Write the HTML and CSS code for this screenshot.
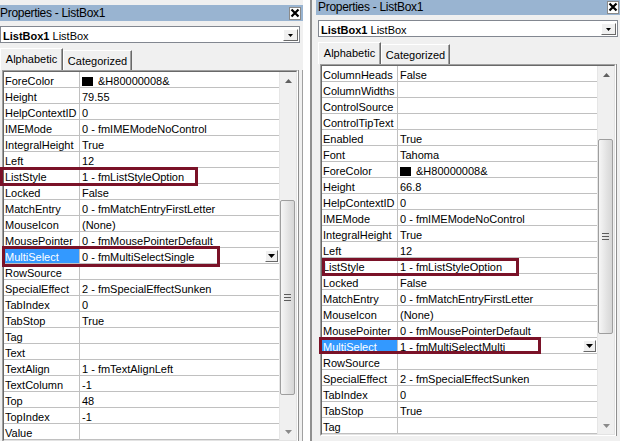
FILE: index.html
```html
<html>
    <head>
        <title>Properties - ListBox1</title>
        <meta name="viewport" content="initial-scale=1.0">
        <link rel="stylesheet" href="styles.css">
    </head>
    <body>
        <!-- before: MultiSelect single -->
        <div class="pane pane-left">
            <div class="titlebar">
                <span class="title">Properties - ListBox1</span>
                <div class="close"><svg width="10" height="10" viewBox="0 0 10 10"><path d="M1.5 1.5 L8.5 8.5 M8.5 1.5 L1.5 8.5" stroke="#000" stroke-width="2.2"/></svg></div>
            </div>
            <div class="combo">
                <b>ListBox1</b>&nbsp;ListBox
                <div class="drop"><svg width="5" height="3" viewBox="0 0 5 3"><path d="M0 0 H5 L2.5 3 Z" fill="#000"/></svg></div>
            </div>
            <div class="tabs">
                <div class="tab tab-on">Alphabetic</div>
                <div class="tab tab-off">Categorized</div>
            </div>
            <div class="frame">
                <div class="grid">
                    <div class="inner">
                        <div class="rows">
                            <div class="row"><div class="name">ForeColor</div><div class="value"><span class="swatch"></span>&amp;H80000008&amp;</div></div>
                            <div class="row"><div class="name">Height</div><div class="value">79.55</div></div>
                            <div class="row"><div class="name">HelpContextID</div><div class="value">0</div></div>
                            <div class="row"><div class="name">IMEMode</div><div class="value">0 - fmIMEModeNoControl</div></div>
                            <div class="row"><div class="name">IntegralHeight</div><div class="value">True</div></div>
                            <div class="row"><div class="name">Left</div><div class="value">12</div></div>
                            <div class="row"><div class="name">ListStyle</div><div class="value">1 - fmListStyleOption</div></div>
                            <div class="row"><div class="name">Locked</div><div class="value">False</div></div>
                            <div class="row"><div class="name">MatchEntry</div><div class="value">0 - fmMatchEntryFirstLetter</div></div>
                            <div class="row"><div class="name">MouseIcon</div><div class="value">(None)</div></div>
                            <div class="row"><div class="name">MousePointer</div><div class="value">0 - fmMousePointerDefault</div></div>
                            <div class="row"><div class="name name-sel">MultiSelect</div><div class="value value-sel"><span>0 - fmMultiSelectSingle</span><div class="pick"><svg width="7" height="4" viewBox="0 0 7 4"><path d="M0 0 H7 L3.5 4 Z" fill="#000"/></svg></div></div></div>
                            <div class="row"><div class="name">RowSource</div><div class="value"></div></div>
                            <div class="row"><div class="name">SpecialEffect</div><div class="value">2 - fmSpecialEffectSunken</div></div>
                            <div class="row"><div class="name">TabIndex</div><div class="value">0</div></div>
                            <div class="row"><div class="name">TabStop</div><div class="value">True</div></div>
                            <div class="row"><div class="name">Tag</div><div class="value"></div></div>
                            <div class="row"><div class="name">Text</div><div class="value"></div></div>
                            <div class="row"><div class="name">TextAlign</div><div class="value">1 - fmTextAlignLeft</div></div>
                            <div class="row"><div class="name">TextColumn</div><div class="value">-1</div></div>
                            <div class="row"><div class="name">Top</div><div class="value">48</div></div>
                            <div class="row"><div class="name">TopIndex</div><div class="value">-1</div></div>
                            <div class="row"><div class="name">Value</div><div class="value"></div></div>
                        </div>
                        <div class="sbar">
                            <div class="arrow"><svg width="7" height="4" viewBox="0 0 7 4"><path d="M3.5 0 L7 4 H0 Z" fill="#606060"/></svg></div>
                            <div class="thumb thumb-low"><div class="grip"></div></div>
                            <div class="arrow arrow-down"><svg width="7" height="4" viewBox="0 0 7 4"><path d="M0 0 H7 L3.5 4 Z" fill="#8a8a8a"/></svg></div>
                        </div>
                    </div>
                </div>
                <div class="edge"></div>
            </div>
        </div>

        <div class="split"></div>

        <!-- after: MultiSelect multi -->
        <div class="pane pane-right">
            <div class="titlebar">
                <span class="title">Properties - ListBox1</span>
                <div class="close"><svg width="10" height="10" viewBox="0 0 10 10"><path d="M1.5 1.5 L8.5 8.5 M8.5 1.5 L1.5 8.5" stroke="#000" stroke-width="2.2"/></svg></div>
            </div>
            <div class="combo">
                <b>ListBox1</b>&nbsp;ListBox
                <div class="drop"><svg width="5" height="3" viewBox="0 0 5 3"><path d="M0 0 H5 L2.5 3 Z" fill="#000"/></svg></div>
            </div>
            <div class="tabs">
                <div class="tab tab-on">Alphabetic</div>
                <div class="tab tab-off">Categorized</div>
            </div>
            <div class="frame">
                <div class="grid">
                    <div class="inner">
                        <div class="rows">
                            <div class="row"><div class="name">ColumnHeads</div><div class="value">False</div></div>
                            <div class="row"><div class="name">ColumnWidths</div><div class="value"></div></div>
                            <div class="row"><div class="name">ControlSource</div><div class="value"></div></div>
                            <div class="row"><div class="name">ControlTipText</div><div class="value"></div></div>
                            <div class="row"><div class="name">Enabled</div><div class="value">True</div></div>
                            <div class="row"><div class="name">Font</div><div class="value">Tahoma</div></div>
                            <div class="row"><div class="name">ForeColor</div><div class="value"><span class="swatch"></span>&amp;H80000008&amp;</div></div>
                            <div class="row"><div class="name">Height</div><div class="value">66.8</div></div>
                            <div class="row"><div class="name">HelpContextID</div><div class="value">0</div></div>
                            <div class="row"><div class="name">IMEMode</div><div class="value">0 - fmIMEModeNoControl</div></div>
                            <div class="row"><div class="name">IntegralHeight</div><div class="value">True</div></div>
                            <div class="row"><div class="name">Left</div><div class="value">12</div></div>
                            <div class="row"><div class="name">ListStyle</div><div class="value">1 - fmListStyleOption</div></div>
                            <div class="row"><div class="name">Locked</div><div class="value">False</div></div>
                            <div class="row"><div class="name">MatchEntry</div><div class="value">0 - fmMatchEntryFirstLetter</div></div>
                            <div class="row"><div class="name">MouseIcon</div><div class="value">(None)</div></div>
                            <div class="row"><div class="name">MousePointer</div><div class="value">0 - fmMousePointerDefault</div></div>
                            <div class="row"><div class="name name-sel">MultiSelect</div><div class="value value-sel"><span>1 - fmMultiSelectMulti</span><div class="pick"><svg width="7" height="4" viewBox="0 0 7 4"><path d="M0 0 H7 L3.5 4 Z" fill="#000"/></svg></div></div></div>
                            <div class="row"><div class="name">RowSource</div><div class="value"></div></div>
                            <div class="row"><div class="name">SpecialEffect</div><div class="value">2 - fmSpecialEffectSunken</div></div>
                            <div class="row"><div class="name">TabIndex</div><div class="value">0</div></div>
                            <div class="row"><div class="name">TabStop</div><div class="value">True</div></div>
                            <div class="row"><div class="name">Tag</div><div class="value"></div></div>
                        </div>
                        <div class="sbar">
                            <div class="arrow"><svg width="7" height="4" viewBox="0 0 7 4"><path d="M3.5 0 L7 4 H0 Z" fill="#606060"/></svg></div>
                            <div class="thumb thumb-high"><div class="grip"></div></div>
                            <div class="arrow arrow-down"><svg width="7" height="4" viewBox="0 0 7 4"><path d="M0 0 H7 L3.5 4 Z" fill="#8a8a8a"/></svg></div>
                        </div>
                    </div>
                </div>
                <div class="edge"></div>
            </div>
        </div>

        <!-- annotation boxes drawn over the grids -->
        <div class="mark mark-a"></div>
        <div class="mark mark-b"></div>
        <div class="mark mark-c"></div>
        <div class="mark mark-d"></div>
    </body>
</html>
```

FILE: styles.css
```css
body {
    margin: 0;
    width: 620px;
    height: 441px;
    overflow: hidden;
    position: relative;
    display: flex;
    align-items: flex-start;
    background-color: #f0f0f0;
    font-family: "Liberation Sans", Arial, sans-serif;
    font-size: 11px;
    color: #000;
}
.pane {
    width: 305px;
    flex: none;
}
.pane-left {
    margin-left: -2px;
    padding-top: 5px;
}
.pane-right {
    margin-top: -1px;
}
.split {
    width: 7px;
    height: 441px;
    flex: none;
    background-color: #fff;
    border-right: 2px solid #8f8f8f;
    margin-right: 4px;
}

/* title bar */
.titlebar {
    height: 16px;
    background-color: #99b4d1;
    display: flex;
    align-items: center;
    justify-content: space-between;
    padding-left: 2px;
}
.title {
    font-size: 12px;
    letter-spacing: -0.3px;
}
.close {
    width: 12px;
    height: 13px;
    box-sizing: border-box;
    margin-right: 2px;
    background-color: #fff;
    border: 1px solid #8a8a8a;
    display: flex;
    align-items: center;
    justify-content: center;
}

/* object combo */
.combo {
    margin: 5px 0 0 2px;
    width: 300px;
    height: 17px;
    box-sizing: border-box;
    border: 1px solid #828790;
    background-color: #fff;
    padding: 3px 0 0 2px;
    line-height: 12px;
    display: flex;
    position: relative;
}
.drop {
    position: absolute;
    right: 1px;
    top: 2px;
    width: 15px;
    height: 12px;
    box-sizing: border-box;
    background-color: #f0f0f0;
    border: 1px solid;
    border-color: #fff #696969 #696969 #fff;
    display: flex;
    align-items: center;
    justify-content: center;
}

/* tabs */
.tabs {
    margin-top: 5px;
    height: 22px;
    padding-left: 2px;
    display: flex;
    align-items: flex-end;
}
.tab {
    box-sizing: border-box;
    border-top: 1px solid #fff;
    border-left: 1px solid #fff;
    border-right: 1px solid #696969;
    box-shadow: inset -1px 0 #a0a0a0;
    padding-top: 4px;
    line-height: 12px;
    text-align: center;
}
.tab-on {
    width: 63px;
    height: 22px;
}
.tab-off {
    width: 69px;
    height: 20px;
}

/* property grid */
.frame {
    display: flex;
    margin-left: 4px;
}
.grid {
    border: 1px solid;
    border-color: #a0a0a0 #fff #fff #a0a0a0;
}
.inner {
    display: flex;
    border: 1px solid;
    border-color: #696969 #e3e3e3 #e3e3e3 #696969;
}
.rows {
    width: 275px;
    background-color: #fff;
}
.row {
    display: flex;
    height: 16px;
    box-sizing: border-box;
    border-bottom: 1px solid #c0c0c0;
}
.name {
    width: 75px;
    flex: none;
    border-right: 1px solid #c0c0c0;
    padding: 4px 0 0 1px;
    box-sizing: border-box;
    width: 76px;
    line-height: 11px;
    white-space: nowrap;
    overflow: hidden;
}
.value {
    flex: 1;
    padding: 4px 0 0 2px;
    line-height: 11px;
    white-space: nowrap;
    overflow: hidden;
}
.name-sel {
    background-color: #3399ff;
    color: #fff;
}
.value-sel {
    display: flex;
    align-items: flex-start;
    padding-top: 0;
    padding-right: 1px;
}
.value-sel span {
    padding-top: 4px;
}
.pick {
    margin-left: auto;
    margin-top: 2px;
    width: 13px;
    height: 12px;
    box-sizing: border-box;
    background-color: #f0f0f0;
    border: 1px solid;
    border-color: #fff #696969 #696969 #fff;
    display: flex;
    align-items: center;
    justify-content: center;
}
.swatch {
    display: inline-block;
    width: 11px;
    height: 9px;
    background-color: #000;
    margin-right: 5px;
    vertical-align: -1px;
}

/* scroll bar */
.sbar {
    width: 17px;
    background-color: #f0f0f0;
    border-left: 1px solid #e6e6e6;
    box-sizing: border-box;
    display: flex;
    flex-direction: column;
}
.arrow {
    height: 17px;
    flex: none;
    display: flex;
    align-items: center;
    justify-content: center;
}
.arrow-down {
    margin-top: auto;
}
.thumb {
    width: 15px;
    height: 195px;
    box-sizing: border-box;
    border: 1px solid #9e9e9e;
    border-radius: 2px;
    background: linear-gradient(to right, #f6f6f6, #e2e2e2 60%, #d6d6d6);
    display: flex;
    align-items: center;
    justify-content: center;
}
.thumb-low {
    margin-top: 111px;
}
.thumb-high {
    margin-top: 56px;
}
.grip {
    width: 7px;
    height: 5px;
    border-top: 1px solid #5c5c5c;
    border-bottom: 1px solid #5c5c5c;
    background: linear-gradient(#5c5c5c, #5c5c5c) center / 7px 1px no-repeat;
}
.edge {
    width: 5px;
    flex: none;
    box-sizing: border-box;
    border-left: 1px solid #8f8f8f;
    border-right: 1px solid #a0a0a0;
    background-color: #f0f0f0;
}

/* red highlight boxes */
.mark {
    position: absolute;
    box-sizing: border-box;
    border: 3px solid #7a1228;
}
.mark-a {
    left: 0;
    top: 167px;
    width: 198px;
    height: 19px;
}
.mark-b {
    left: 2px;
    top: 246px;
    width: 218px;
    height: 21px;
}
.mark-c {
    left: 322px;
    top: 258px;
    width: 197px;
    height: 18px;
}
.mark-d {
    left: 319px;
    top: 337px;
    width: 222px;
    height: 17px;
}
```
